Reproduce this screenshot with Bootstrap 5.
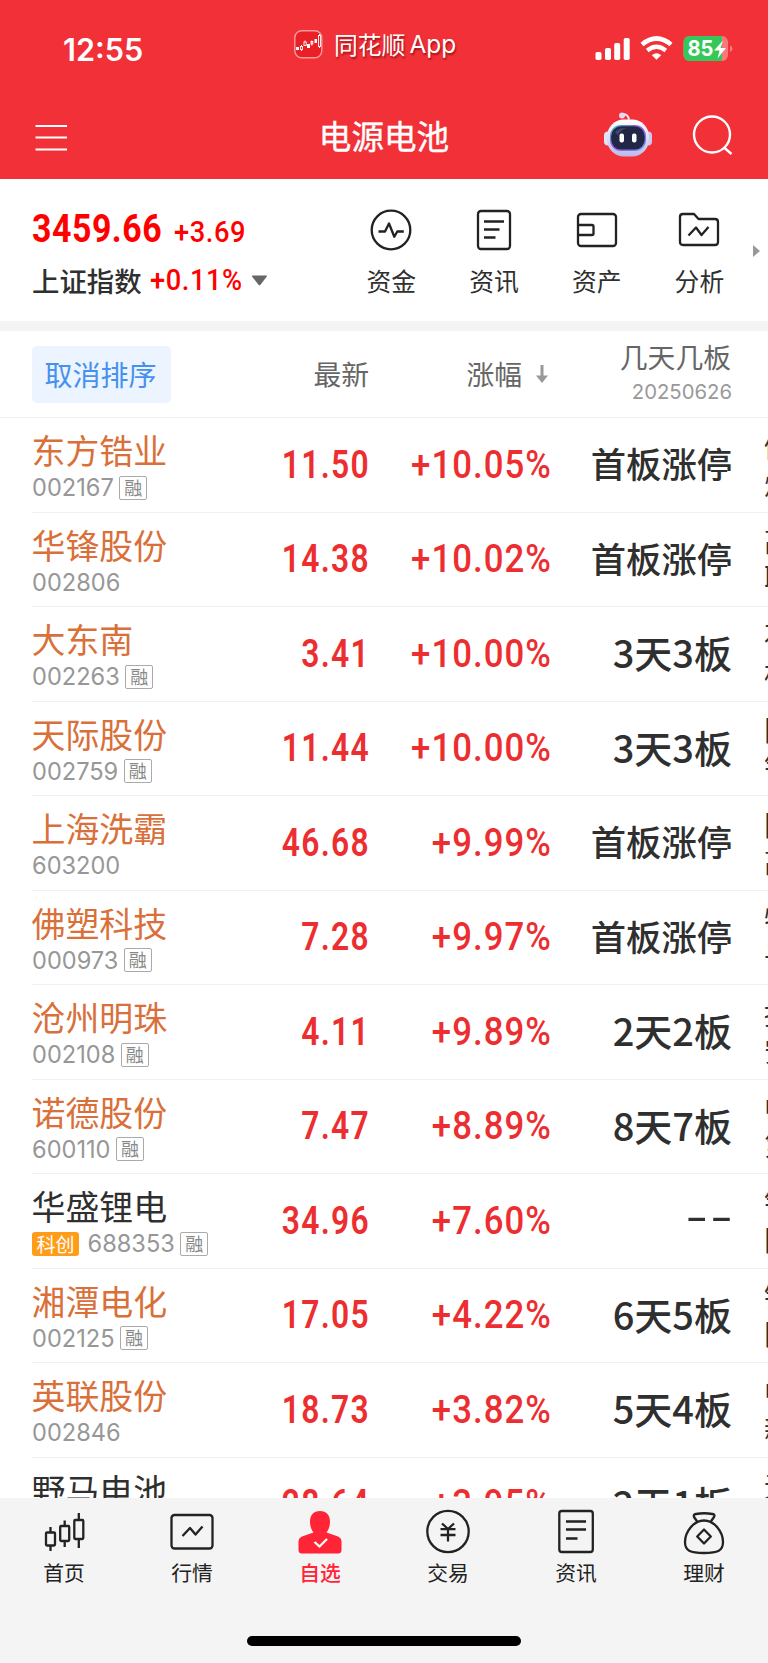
<!DOCTYPE html>
<html lang="zh-CN">
<head>
<meta charset="utf-8">
<meta name="viewport" content="width=device-width, initial-scale=1">
<title>电源电池</title>
<link href="https://cdn.jsdelivr.net/npm/bootstrap@5.3.0/dist/css/bootstrap.min.css" rel="stylesheet">
<script src="https://cdn.jsdelivr.net/npm/bootstrap@5.3.0/dist/js/bootstrap.bundle.min.js"></script>
<style>
body{width:768px;height:1663px;overflow:hidden;background:#fff;color:#2f2f2f;font-family:"Noto Sans CJK SC",sans-serif;line-height:1}
svg{display:block;flex:none;overflow:visible}
.latin{font-family:Inter,"Noto Sans CJK SC",sans-serif}
.top-area{height:179px;background:#f23037;color:#fff}
.status{height:92px;padding:0 36px 0 63px}
.clock{font-size:30.6px;font-weight:600;width:231px;line-height:36px;margin-top:32px}
.back-app{font-size:23.8px;line-height:30px;margin-top:29px;text-shadow:1px 2px 2px rgba(110,0,0,.6);white-space:nowrap}
.title-row{height:87px;padding:0 35px}
.page-title{font-size:32.6px;line-height:40px;-webkit-text-stroke:.4px #fff;margin-top:-1px}
.side{width:130px}
.market{height:142px;padding-left:32px}
.idx-val,.idx-chg{font-family:Roboto,sans-serif;color:#f00;line-height:40px;white-space:nowrap;transform-origin:left center}
.idx-val{font-size:38.5px;font-weight:700;letter-spacing:.6px;width:128px;transform:scaleX(.88)}
.idx-chg{font-size:29.5px;font-weight:500;letter-spacing:.6px;width:94px;transform:scaleX(.925)}
.idx-name{font-size:27.4px;line-height:40px;font-weight:500;margin-top:-1px}
.quick{width:102.7px;font-size:24.8px}
.quick svg{margin-bottom:14px}
.quick span{line-height:32px}
.band{height:10px;background:#f4f4f4}
.list-top{height:87px;border-bottom:1.5px solid #eee;color:#666;font-size:27.8px;padding-left:32px}
.btn-sort{width:139px;height:57px;background:#ebf4ff;color:#4691ee;font-size:28px;padding:0 2px 0 0;border:0;border-radius:5px;line-height:57px}
.c-price{width:231px;text-align:right}
.c-pct{width:181px;text-align:right}
.c-tag{width:181px;text-align:right}
.stocks{height:1080px;overflow:hidden;padding-left:32px}
.stock{height:94.5px;border-bottom:1.5px solid #f1f1f1;width:736px;overflow:hidden}
.info{width:139px;white-space:nowrap}
.info .d-flex{margin-top:5px}
.nm{font-size:33.9px;line-height:40px;color:#d9703a;margin-top:12px;margin-left:-.5px}
.nm.plain{color:#2f2f2f}
.code{font-family:Inter,sans-serif;font-size:23.6px;line-height:25px;color:#979797}
.stock .c-price,.stock .c-pct{font-family:Roboto,sans-serif;font-size:39.5px;letter-spacing:1.6px;color:#ec2e30;font-weight:600;line-height:50px;margin-top:0;transform-origin:right center;transform:scaleX(.805)}
.stock .c-price{width:199px}
.stock .c-pct{font-weight:500;letter-spacing:1.2px;width:182px;transform:scaleX(.88)}
.stock .c-tag{font-size:35.3px;font-weight:500;line-height:50px;white-space:nowrap;margin-top:-3px;margin-left:-1px}
.stock .c-tag.days{font-size:38px}
.dash{display:inline-block;transform:translate(3px,-5px) scaleX(1.65);transform-origin:right center;letter-spacing:1.5px}
.rz{width:28px;height:24px;border:1.5px solid #aaa;border-radius:2px;color:#888;font-size:18px;line-height:21px;text-align:center;margin-left:5.5px;flex:none}
.kc{width:47px;height:24px;background:#ff9c1a;border-radius:3px;color:#fff;font-size:19px;line-height:23px;text-align:center;margin-right:8.5px;flex:none}
.more{width:4px;overflow:hidden;margin-left:32px;font-size:28px;line-height:37px;height:78px;padding-top:2px;white-space:nowrap}
.tabs{height:165px;background:#f4f4f4;color:#222}
.tab-btn{width:128px;height:100px;font-size:20.8px;padding-top:11px}
.tab-btn span{line-height:28px;margin-top:5px}
.tab-btn.on{color:#ff2436;font-weight:500}
.home-bar{width:274px;height:10px;border-radius:5px;background:#000;margin:38px auto 0}
.ln{fill:none;stroke:#222;stroke-width:2.3;stroke-linejoin:round}
</style>
</head>
<body>
<header class="top-area">
  <div class="status d-flex align-items-start">
    <div class="clock latin">12:55</div>
    <svg width="28" height="28" viewBox="0 0 28 28" style="margin-top:30px"><rect x=".8" y=".8" width="27" height="27" rx="7" fill="#e92025" stroke="#f79a9c" stroke-width="1.4"/><g fill="#fff"><rect x="2" y="17" width="3" height="3"/><rect x="13" y="14" width="3" height="4"/><rect x="20.500" y="9" width="2.500" height="4"/></g><g fill="none" stroke="#fff" stroke-width=".9"><rect x="6.500" y="16.500" width="2" height="3"/><path d="M7.500 15v1.500M7.500 19.500V21M11 10.500V12M17.800 10.500v5"/><rect x="10" y="12" width="2.200" height="3.500"/><rect x="17" y="11.500" width="1.800" height="2.500"/><rect x="24.500" y="5.500" width="2" height="11"/><path d="M25.500 4v1.500M25.500 16.500V18"/></g></svg>
    <div class="back-app ms-2 ps-1 d-flex"><span>同花顺</span><span class="latin" style="font-size:24.500px;margin-left:4px">App</span></div>
    <svg class="ms-auto" width="136" height="28" viewBox="595 35 136 28" style="margin-top:35px">
      <g fill="#fff"><rect x="594.500" y="52" width="6" height="8" rx="1.700"/><rect x="604" y="48" width="6" height="12" rx="1.700"/><rect x="613.200" y="43" width="6" height="17" rx="1.700"/><rect x="622.700" y="38" width="6" height="22" rx="1.700"/></g>
      <path d="M641 44.500Q655.500 32.500 670 44.500" fill="none" stroke="#fff" stroke-width="4.600"/><path d="M646.200 50.500Q655.500 43 664.800 50.500" fill="none" stroke="#fff" stroke-width="4.200"/><path d="M650.800 55.200q4.700-3.700 9.400 0l-4.700 4.600z" fill="#fff"/>
      <rect x="682.500" y="36" width="44.500" height="25" rx="6" fill="#f9787c"/><path d="M688.500 36H721v25h-32.500a6 6 0 0 1-6-6V42a6 6 0 0 1 6-6z" fill="#34c759"/><path d="M729 45.500q2.600 1 2.600 3.200t-2.600 3.200z" fill="#f9787c"/>
      <text x="686.500" y="56.300" fill="#fff" font-family="Inter,sans-serif" font-weight="700" font-size="21.500" textLength="26" lengthAdjust="spacingAndGlyphs">85</text><path d="M722 40.500 713 50.500h5.500l-2 8 8.500-10.500h-5.500z" fill="#fff"/>
    </svg>
  </div>
  <div class="title-row d-flex align-items-center justify-content-between">
    <div class="side"><svg width="32" height="28" viewBox="0 0 32 28" style="margin-top:2px"><path d="M.5 3H32M.5 14.500H32M.5 26.500H32" stroke="#fff" stroke-width="2"/></svg></div>
    <div class="page-title">电源电池</div>
    <div class="side d-flex justify-content-end align-items-center">
      <svg width="48" height="45" viewBox="1 1.500 48 45">
        <defs><linearGradient id="hd" x2="0" y2="1"><stop stop-color="#fff"/><stop offset="1" stop-color="#bdb9e9"/></linearGradient><linearGradient id="fc" x2="1" y2="1"><stop stop-color="#35b7c2"/><stop offset=".5" stop-color="#9e55e0"/><stop offset="1" stop-color="#5c9cf0"/></linearGradient></defs>
        <path d="M18 3q6-1 7 5" fill="none" stroke="#f0eefd" stroke-width="2"/><circle cx="18" cy="4" r="3" fill="#e7d8ee"/>
        <rect x="0" y="20" width="8" height="14" rx="4" fill="#e4e2f5"/><rect x="40" y="20" width="8" height="14" rx="4" fill="#d0c8ee"/>
        <rect x="3" y="8" width="42" height="37" rx="17" fill="url(#hd)"/><rect x="6" y="13.500" width="36" height="26" rx="11" fill="url(#fc)"/><rect x="7.200" y="14.800" width="33.500" height="23.300" rx="10" fill="#222746"/><path d="M11 21q3-5 11-4.500-6 3-8 7z" fill="#41466b"/>
        <rect x="15.500" y="22" width="4.500" height="9" rx="2" fill="#fff"/><rect x="28" y="22" width="4.500" height="9" rx="2" fill="#fff"/>
      </svg>
      <svg width="40" height="40" viewBox="0.500 0 40 40" style="margin-left:40px"><g fill="none" stroke="#fff" stroke-width="2.400"><circle cx="19.500" cy="18.500" r="18"/><path d="m31.500 31.500 7.500 6.500"/></g></svg>
    </div>
  </div>
</header>
<section class="market d-flex">
  <div style="width:308px;padding-top:30px">
    <div class="d-flex"><div class="idx-val">3459.66</div><div class="idx-chg" style="margin:3px 0 0 14px">+3.69</div></div>
    <div class="d-flex align-items-center" style="margin-top:8px"><div class="idx-name">上证指数</div><div class="idx-chg ms-2">+0.11%</div><svg width="17" height="11" viewBox="0 0 17 11" style="margin-left:7px"><path d="M1.500.500h14q1 0 .3.900L9.500 9.800q-1 1-2 0L1 1.400Q.5.500 1.500.500z" fill="#666"/></svg></div>
  </div>
  <nav class="d-flex" style="padding-top:31px">
    <div class="quick d-flex flex-column align-items-center"><svg width="40" height="40" viewBox="0 0 40 40" class="ln"><circle cx="20" cy="20" r="19.300"/><path d="M7.500 21.500h6.500l4-8 5.300 13.300 3-5.300h6.500"/></svg><span>资金</span></div>
    <div class="quick d-flex flex-column align-items-center"><svg width="40" height="40" viewBox="0 0 40 40" class="ln"><rect x="4" y="1" width="32" height="38" rx="3"/><path d="M10 11.500h20M10 19.500h15.500M10 27.500h11.500"/></svg><span>资讯</span></div>
    <div class="quick d-flex flex-column align-items-center"><svg width="40" height="40" viewBox="0 0 40 40" class="ln"><rect x="1" y="4" width="38" height="32" rx="3"/><path d="M1 15h14q1.500 0 1.500 1.500v7q0 1.500-1.500 1.500H1"/></svg><span>资产</span></div>
    <div class="quick d-flex flex-column align-items-center"><svg width="40" height="40" viewBox="0 0 40 40" class="ln"><path d="M4 4h11l4.500 5H36q3 0 3 3v20q0 3-3 3H4q-3 0-3-3V7q0-3 3-3z"/><path d="m9.500 25.500 7.500-8 5.500 7.500 7-8"/></svg><span>分析</span></div>
  </nav>
  <svg width="7" height="12" viewBox="0 0 7 12" style="margin:66px 0 0 2px"><path d="M0 0v12l7-6z" fill="#999"/></svg>
</section>
<div class="band"></div>
<section class="list-top d-flex align-items-center">
  <button class="btn btn-sort">取消排序</button>
  <div class="c-price" style="width:198px">最新</div>
  <div class="c-pct d-flex justify-content-end align-items-center"><span>涨幅</span><svg width="12" height="18" viewBox="0 0 12 18" style="margin-left:14px;margin-right:2px"><path d="M4.500 0h3v10.500H12L6 18 0 10.500h4.500z" fill="#999"/></svg></div>
  <div class="c-tag"><div style="line-height:34px;margin-top:-4px">几天几板</div><div class="latin" style="font-size:20.300px;line-height:28px;color:#999;margin-top:5px;margin-right:-1px">20250626</div></div>
</section>
<main class="stocks">
  <div class="stock d-flex align-items-center"><div class="info align-self-start"><div class="nm">东方锆业</div><div class="d-flex align-items-center"><span class="code">002167</span><span class="rz">融</span></div></div><div class="c-price">11.50</div><div class="c-pct">+10.05%</div><div class="c-tag">首板涨停</div><div class="more">储能<br>烧结</div></div>
  <div class="stock d-flex align-items-center"><div class="info align-self-start"><div class="nm">华锋股份</div><div class="d-flex align-items-center"><span class="code">002806</span></div></div><div class="c-price">14.38</div><div class="c-pct">+10.02%</div><div class="c-tag">首板涨停</div><div class="more">高压<br>联合</div></div>
  <div class="stock d-flex align-items-center"><div class="info align-self-start"><div class="nm">大东南</div><div class="d-flex align-items-center"><span class="code">002263</span><span class="rz">融</span></div></div><div class="c-price">3.41</div><div class="c-pct">+10.00%</div><div class="c-tag days">3天3板</div><div class="more">石墨<br>机器</div></div>
  <div class="stock d-flex align-items-center"><div class="info align-self-start"><div class="nm">天际股份</div><div class="d-flex align-items-center"><span class="code">002759</span><span class="rz">融</span></div></div><div class="c-price">11.44</div><div class="c-pct">+10.00%</div><div class="c-tag days">3天3板</div><div class="more">固态<br>锂电</div></div>
  <div class="stock d-flex align-items-center"><div class="info align-self-start"><div class="nm">上海洗霸</div><div class="d-flex align-items-center"><span class="code">603200</span></div></div><div class="c-price">46.68</div><div class="c-pct">+9.99%</div><div class="c-tag">首板涨停</div><div class="more">固态<br>高校</div></div>
  <div class="stock d-flex align-items-center"><div class="info align-self-start"><div class="nm">佛塑科技</div><div class="d-flex align-items-center"><span class="code">000973</span><span class="rz">融</span></div></div><div class="c-price">7.28</div><div class="c-pct">+9.97%</div><div class="c-tag">首板涨停</div><div class="more">特种<br>子膜</div></div>
  <div class="stock d-flex align-items-center"><div class="info align-self-start"><div class="nm">沧州明珠</div><div class="d-flex align-items-center"><span class="code">002108</span><span class="rz">融</span></div></div><div class="c-price">4.11</div><div class="c-pct">+9.89%</div><div class="c-tag days">2天2板</div><div class="more">拟建<br>安全</div></div>
  <div class="stock d-flex align-items-center"><div class="info align-self-start"><div class="nm">诺德股份</div><div class="d-flex align-items-center"><span class="code">600110</span><span class="rz">融</span></div></div><div class="c-price">7.47</div><div class="c-pct">+8.89%</div><div class="c-tag days">8天7板</div><div class="more">中标<br>第一</div></div>
  <div class="stock d-flex align-items-center"><div class="info align-self-start"><div class="nm plain">华盛锂电</div><div class="d-flex align-items-center"><span class="kc">科创</span><span class="code">688353</span><span class="rz">融</span></div></div><div class="c-price">34.96</div><div class="c-pct">+7.60%</div><div class="c-tag days"><span class="dash">--</span></div><div class="more">锂电<br>固态</div></div>
  <div class="stock d-flex align-items-center"><div class="info align-self-start"><div class="nm">湘潭电化</div><div class="d-flex align-items-center"><span class="code">002125</span><span class="rz">融</span></div></div><div class="c-price">17.05</div><div class="c-pct">+4.22%</div><div class="c-tag days">6天5板</div><div class="more">锰酸<br>固态</div></div>
  <div class="stock d-flex align-items-center"><div class="info align-self-start"><div class="nm">英联股份</div><div class="d-flex align-items-center"><span class="code">002846</span></div></div><div class="c-price">18.73</div><div class="c-pct">+3.82%</div><div class="c-tag days">5天4板</div><div class="more">中标<br>新品</div></div>
  <div class="stock d-flex align-items-center"><div class="info align-self-start"><div class="nm plain">野马电池</div></div><div class="c-price">28.64</div><div class="c-pct">+3.95%</div><div class="c-tag days">2天1板</div><div class="more">无汞<br>固态</div></div>
</main>
<footer class="tabs">
  <nav class="d-flex">
    <div class="tab-btn d-flex flex-column align-items-center"><svg width="44" height="44" viewBox="0 0 44 44" class="ln"><path d="M8.500 18v5.500M8.500 36.500V42M22.700 11.500V17M22.700 32v6M36.800 4v7M36.800 30v9"/><rect x="4" y="23.500" width="9" height="13" rx="1"/><rect x="18.200" y="17" width="9" height="15" rx="1"/><rect x="32.300" y="11" width="9" height="19" rx="1"/></svg><span>首页</span></div>
    <div class="tab-btn d-flex flex-column align-items-center"><svg width="44" height="44" viewBox="0 0 44 44" class="ln"><rect x="1.500" y="6" width="41" height="33.500" rx="3"/><path d="m12.500 27 7.500-8 5.500 6.500 7-8"/></svg><span>行情</span></div>
    <div class="tab-btn on d-flex flex-column align-items-center"><svg width="44" height="44" viewBox="0 0 44 44"><path d="M22 2c6 0 10 4 10 10.500 0 5-1.500 8.500-3.500 11L40 27.500q3.500 1.500 3.500 5V41q0 3.500-3.500 3.500H4Q.5 44.500.5 41v-8.500q0-3.500 3.500-5l11.500-4c-2-2.500-3.500-6-3.500-11C12 6 16 2 22 2z" fill="#ff2436"/><path d="m16.500 33 5 4.500L29 30" fill="none" stroke="#fff" stroke-width="2.300"/></svg><span>自选</span></div>
    <div class="tab-btn d-flex flex-column align-items-center"><svg width="44" height="44" viewBox="0 0 44 44" class="ln"><circle cx="22" cy="22.500" r="20.700"/><path d="m16 14.500 6 5.500 6-5.500M14.500 20.200h15M14.500 26h15M22 20v12.500"/></svg><span>交易</span></div>
    <div class="tab-btn d-flex flex-column align-items-center"><svg width="44" height="44" viewBox="0 0 44 44" class="ln"><rect x="5.300" y="2" width="33.500" height="41" rx="2.500"/><path d="M12 12.500h20M12 20.500h20M12 29.500h11.500"/></svg><span>资讯</span></div>
    <div class="tab-btn d-flex flex-column align-items-center"><svg width="44" height="44" viewBox="0 0 44 44" class="ln"><path d="M15.500 13 12 8q-1-2.500 2-3 8-1.500 16.500 0 3 .5 1.500 3l-3.500 5"/><path d="M22 11.500c10.500 0 19 11.500 19 21.500C41 41.500 36 44 22 44S3 41.500 3 33c0-10 8.500-21.500 19-21.500z"/><path d="m22 20.500 6.800 7-6.800 7-6.800-7z"/></svg><span>理财</span></div>
  </nav>
  <div class="home-bar"></div>
</footer>
</body>
</html>
